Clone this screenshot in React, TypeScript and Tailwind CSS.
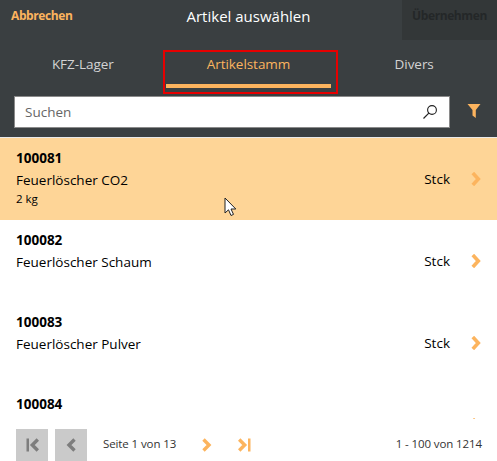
import { useState } from "react";

const items = [
  { id: "100081", name: "Feuerlöscher CO2", sub: "2 kg" },
  { id: "100082", name: "Feuerlöscher Schaum" },
  { id: "100083", name: "Feuerlöscher Pulver" },
  { id: "100084", name: "Feuerlöscher Wasser" },
];

function Chevron({ className }: { className?: string }) {
  return (
    <svg viewBox="0 0 10 14" className={className}>
      <path d="M1.8 1 L7.3 7 L1.8 13" fill="none" stroke="#fcb45e" strokeWidth="3.6" />
    </svg>
  );
}

function Pager({ dir, end, disabled }: { dir: "left" | "right"; end?: boolean; disabled?: boolean }) {
  const color = disabled ? "#7d7d7d" : "#fcb45e";
  const flip = dir === "left";
  return (
    <div className={`w-8 h-8 flex items-center justify-center ${disabled ? "bg-[#cacaca]" : ""}`}>
      <svg viewBox="0 0 14 14" className={`w-[14px] h-[14px] ${flip ? "-scale-x-100" : ""}`}>
        <path d={end ? "M1.2 1.5 L6.7 7 L1.2 12.5" : "M3.5 1.5 L9 7 L3.5 12.5"} fill="none" stroke={color} strokeWidth="3.4" />
        {end && <rect x="10" y="0.5" width="2.5" height="13" fill={color} />}
      </svg>
    </div>
  );
}

export default function App() {
  const [tab, setTab] = useState("Artikelstamm");
  return (
    <div className="relative w-[497px] h-[461px] overflow-hidden bg-white flex flex-col font-['Open_Sans','Noto_Sans',sans-serif]">
      {/* Header */}
      <div className="bg-[#3a3f41] h-[138px] flex-none border-b border-b-[#e8e8e8]">
        <div className="relative flex items-center justify-between h-10">
          <span className="pl-[11px] pb-2 text-[12px] font-bold tracking-[-0.4px] text-[#fcb45e]">Abbrechen</span>
          <span className="absolute left-0 right-0 text-center pb-[7px] text-[15px] text-white pointer-events-none">Artikel auswählen</span>
          <span className="w-[95px] h-10 bg-[#333738] flex items-center justify-center pb-2 text-[12px] font-bold tracking-[-0.4px] text-[#242728]">Übernehmen</span>
        </div>
        <div className="grid grid-cols-3 mt-[10px] h-[38px]">
          {["KFZ-Lager", "Artikelstamm", "Divers"].map((t) => (
            <button
              key={t}
              onClick={() => setTab(t)}
              className={`h-[38px] pb-[5px] text-[13.5px] tracking-[-0.05px] border-b-4 ${
                tab === t ? "text-[#fcb45e] border-b-[#fcb45e]" : "text-[#d3d3d3] border-b-transparent"
              }`}
            >
              {t}
            </button>
          ))}
        </div>
        <div className="flex items-center mt-[8px] pl-[14px]">
          <div className="w-[436px] h-8 flex items-center justify-between bg-white border border-[#8a8a8a] pl-[10px] pr-[11px]">
            <span className="text-[13.5px] pt-[1px] text-[#666666]">Suchen</span>
            <svg viewBox="0 0 16 16" className="w-4 h-4">
              <circle cx="10" cy="6" r="4.4" fill="none" stroke="#222" strokeWidth="1.1" />
              <path d="M6.8 9.2 L1.5 14.5" stroke="#222" strokeWidth="1.2" />
            </svg>
          </div>
          <svg viewBox="0 0 14 16" className="w-[14px] h-4 ml-[17px] mb-[3px]">
            <path d="M0.5 1 H13.5 L8.8 7 V15 L5.5 12.5 V7 Z" fill="#fcb45e" />
          </svg>
        </div>
      </div>

      {/* List */}
      <div className="flex-1 min-h-0 overflow-hidden">
        {items.map((item, i) => (
          <div key={item.id} className={`h-[82px] flex items-center pl-4 pr-4 text-black ${i === 0 ? "bg-[#fed597]" : ""}`}>
            <div className="flex-1 self-start pt-[10px]">
              <div className="text-[13.5px] leading-[20px] font-bold">{item.id}</div>
              <div className="text-[13.5px] leading-[20px] mt-[2px]">{item.name}</div>
              {item.sub && <div className="text-[11.5px] leading-[18px]">{item.sub}</div>}
            </div>
            <span className="text-[13.5px] mr-[21px]">Stck</span>
            <Chevron className="w-[10px] h-[14px]" />
          </div>
        ))}
      </div>

      {/* Footer */}
      <div className="absolute left-0 right-0 bottom-0 h-[42px] bg-white flex items-end pl-4 pr-[15px]">
        <Pager dir="left" end disabled />
        <div className="ml-[7px]">
          <Pager dir="left" disabled />
        </div>
        <span className="self-center mt-[8px] ml-4 text-[11.5px] tracking-[-0.1px] text-[#333333]">Seite 1 von 13</span>
        <div className="ml-[15px]">
          <Pager dir="right" />
        </div>
        <div className="ml-[6px]">
          <Pager dir="right" end />
        </div>
        <span className="ml-auto self-center mt-[8px] text-[11.5px] tracking-[-0.1px] text-[#333333]">1 - 100 von 1214</span>
      </div>

      {/* Red annotation box */}
      <div className="absolute left-[163px] top-[50px] w-[175px] h-[44px] border-2 border-[#e60000] pointer-events-none" />

      {/* Mouse cursor */}
      <svg viewBox="0 0 13 20" className="absolute left-[224px] top-[197px] w-[13px] h-5">
        <path d="M1 1 V16 L4.5 12.8 L7 18.5 L9.5 17.4 L7 12 H11.8 Z" fill="white" stroke="#222" strokeWidth="1" />
      </svg>
    </div>
  );
}
